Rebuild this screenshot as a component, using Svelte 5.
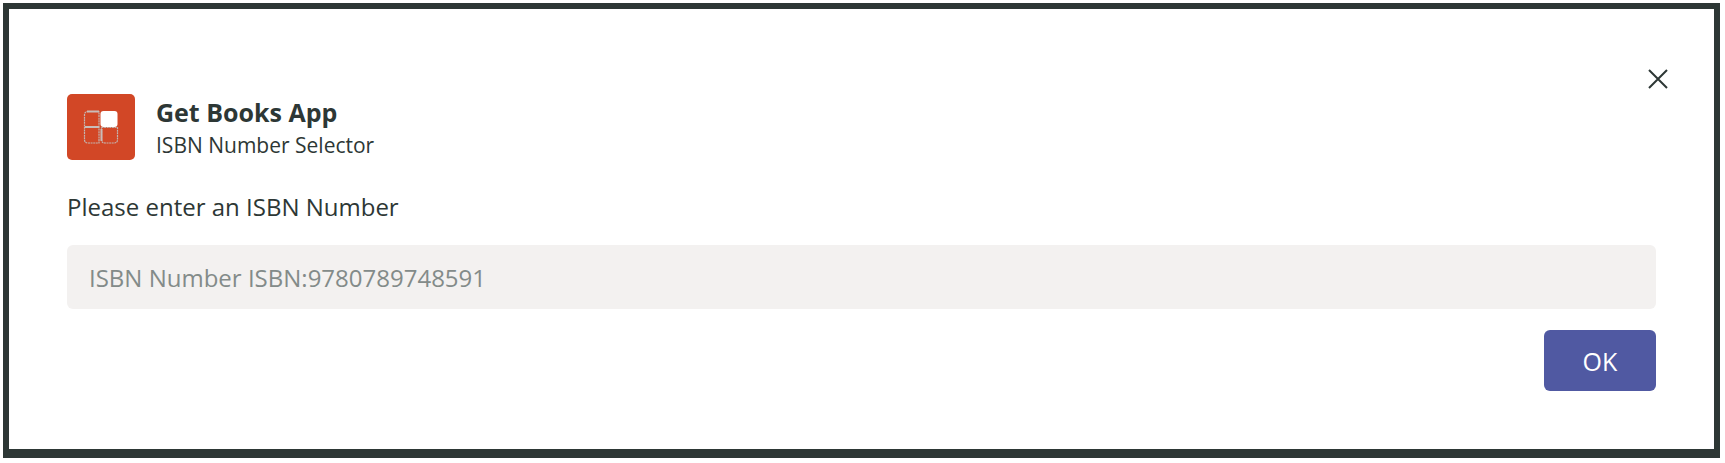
<script>
  let isbn = $state('');
</script>

<main class="dialog">
  <header>
    <svg class="logo" viewBox="0 0 68 66" aria-hidden="true">
      <rect width="68" height="66" rx="5" fill="#d24726" />
      <g fill="none" stroke="#c4b5b0" stroke-width="1.2" stroke-dasharray="2 .6">
        <path d="M32 17.500H21q-3.500 0-3.500 3.500v11.500H32z" />
        <path d="M17.500 33.500H32V49H21q-3.500 0-3.500-3.500z" />
        <path d="M34.500 33.500H50.500V45.500q0 3.500-3.500 3.500H38q-3.500 0-3.500-3.500z" />
      </g>
      <path d="M18 33H32M20 17.500H32M34.500 35V47" stroke="#c9bdb9" stroke-width="2" />
      <rect x="33.500" y="17" width="17" height="16" rx="3" fill="#fff" />
    </svg>
    <div class="titles">
      <h1>Get Books App</h1>
      <p>ISBN Number Selector</p>
    </div>
    <button class="close" type="button" aria-label="Close">
      <svg viewBox="0 0 20 20" aria-hidden="true">
        <path d="M1 1L19 19M19 1L1 19" stroke="#2d3735" stroke-width="2" />
      </svg>
    </button>
  </header>
  <form onsubmit={(event) => event.preventDefault()}>
    <label for="isbn">Please enter an ISBN Number</label>
    <input id="isbn" type="text" placeholder="ISBN Number ISBN:9780789748591" bind:value={isbn} />
    <button class="ok" type="submit">OK</button>
  </form>
</main>

<style>
  :global(body) {
    background: #fff;
  }
  .dialog {
    box-sizing: border-box;
    margin: 3px 5px 0 3px;
    padding: 60px 58px 58px;
    border: 6px solid #2d3735;
    border-bottom-width: 9px;
    background: #fff;
    color: #2d3735;
    font-family: "Open Sans", "Noto Sans", sans-serif;
    font-size: 24px;
    line-height: 32px;
  }
  header {
    display: flex;
    align-items: flex-start;
  }
  .logo {
    width: 68px;
    height: 66px;
    margin-top: 25px;
    flex: none;
  }
  .titles {
    flex: 1;
    margin: 25px 0 0 21px;
  }
  h1,
  p {
    margin: 0;
  }
  h1 {
    font-size: 25px;
    font-weight: 700;
    line-height: 37px;
  }
  p {
    font-size: 21px;
    line-height: 28px;
  }
  button {
    padding: 0;
    border: 0;
    font: inherit;
    cursor: pointer;
  }
  .close {
    display: flex;
    margin-right: -12px;
    background: transparent;
  }
  .close svg {
    width: 20px;
    height: 20px;
  }
  form {
    display: flex;
    flex-direction: column;
  }
  label {
    margin: 31px 0 22px;
  }
  input {
    box-sizing: border-box;
    width: 100%;
    height: 64px;
    padding: 0 22px;
    border: 0;
    border-radius: 6px;
    background: #f3f1f0;
    color: #2d3735;
    font: inherit;
  }
  input::placeholder {
    color: #838b89;
    opacity: 1;
  }
  .ok {
    align-self: flex-end;
    width: 112px;
    height: 61px;
    margin-top: 21px;
    border-radius: 6px;
    background: #5059a2;
    color: #fff;
    font-size: 25px;
  }
</style>
